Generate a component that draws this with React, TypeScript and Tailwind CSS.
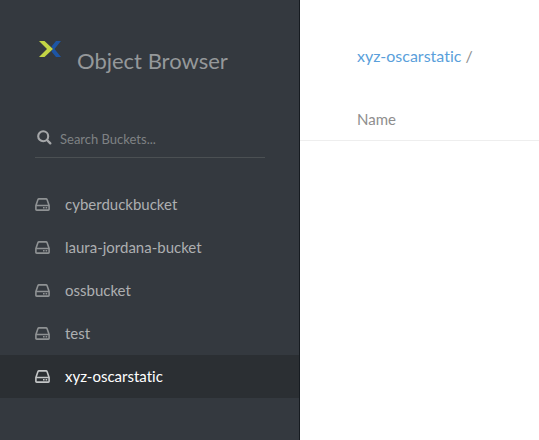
const buckets = [
  "cyberduckbucket",
  "laura-jordana-bucket",
  "ossbucket",
  "test",
  "xyz-oscarstatic",
];

const activeBucket = "xyz-oscarstatic";

function Logo() {
  return (
    <svg className="h-4 w-[22px] shrink-0" viewBox="0 0 22 16" aria-hidden="true">
      <path d="M17 0H22L15.5 8L22 16H17L12.5 10.5L14 8L12.5 5.5Z" fill="#1d55a5" />
      <path d="M0 0H5.5L14 8L5.5 16H0L8 8Z" fill="#c3d545" />
    </svg>
  );
}

function SearchIcon() {
  return (
    <svg className="size-[15px] shrink-0" viewBox="0 0 15 15" fill="none" aria-hidden="true">
      <circle cx="6.2" cy="6.2" r="5" stroke="currentColor" strokeWidth="2.1" />
      <path d="M10 10L13.3 13.3" stroke="currentColor" strokeWidth="2.4" strokeLinecap="round" />
    </svg>
  );
}

function DriveIcon() {
  return (
    <svg className="h-[13px] w-[15px] shrink-0" viewBox="0 0 15 13" fill="none" aria-hidden="true">
      <path
        d="M0.9 7.6L2.9 1.8C3.1 1.2 3.4 0.9 4 0.9H11C11.6 0.9 11.9 1.2 12.1 1.8L14.1 7.6V11.3C14.1 11.8 13.8 12.1 13.3 12.1H1.7C1.2 12.1 0.9 11.8 0.9 11.3ZM1.1 7.5H13.9"
        stroke="currentColor"
        strokeWidth="1.6"
        strokeLinejoin="round"
      />
      <path d="M8 9.1H9.6V10.6H8ZM10.6 9.1H12.2V10.6H10.6Z" fill="currentColor" />
    </svg>
  );
}

export default function App() {
  return (
    <div className="flex min-h-screen bg-white font-['Lato',sans-serif] text-[15px] leading-5 text-[#8e8e8e] [font-variant-ligatures:none]">
      <aside className="w-[300px] shrink-0 border-r border-[#161b20] bg-[#34393f]">
        <header className="flex items-start gap-4 pt-[41px] pl-[39px]">
          <Logo />
          <h1 className="pt-1 text-[22px] leading-8 text-[#95989a]">Object Browser</h1>
        </header>

        <div className="mt-11 mr-[34px] ml-[35px] flex h-[37px] items-center gap-2 border-b border-[#4b5053] pl-0.5">
          <span className="pb-1 text-[#a5a7a9]">
            <SearchIcon />
          </span>
          <input
            type="text"
            aria-label="Search Buckets"
            placeholder="Search Buckets..."
            className="min-w-0 flex-1 bg-transparent text-[13px] leading-5 text-white outline-none placeholder:text-[#7f8284]"
          />
        </div>

        <nav className="mt-[25px]" aria-label="Buckets">
          <ul>
            {buckets.map((bucket) => (
              <li key={bucket}>
                <a
                  href="#"
                  aria-current={bucket === activeBucket ? "page" : undefined}
                  className={
                    bucket === activeBucket
                      ? "flex h-[43px] items-center gap-[15px] bg-[#2b2f33] pb-0.5 pl-[35px] text-white"
                      : "flex h-[43px] items-center gap-[15px] pb-0.5 pl-[35px] text-[#adafb1]"
                  }
                >
                  <span
                    className={
                      bucket === activeBucket
                        ? "pt-0.5 text-[#c4c6c7]"
                        : "pt-0.5 text-[#8f9294]"
                    }
                  >
                    <DriveIcon />
                  </span>
                  {bucket}
                </a>
              </li>
            ))}
          </ul>
        </nav>
      </aside>

      <main className="min-w-0 flex-1">
        <nav className="pt-[46px] pl-[57px] text-base leading-5" aria-label="Path">
          <a href="#" className="text-[#5a9fdb]">
            xyz-oscarstatic
          </a>{" "}
          /
        </nav>
        <table className="mt-[43px] w-full">
          <thead>
            <tr className="border-b border-[#eeeeee]">
              <th className="pb-[11px] pl-[57px] text-left align-top font-normal">Name</th>
            </tr>
          </thead>
        </table>
      </main>
    </div>
  );
}
